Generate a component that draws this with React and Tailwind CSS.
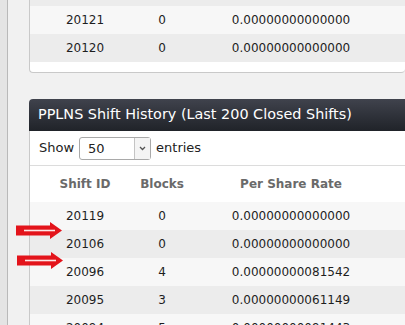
const topRows = [
  { id: '20121', blocks: '0', rate: '0.00000000000000' },
  { id: '20120', blocks: '0', rate: '0.00000000000000' },
];

const rows = [
  { id: '20119', blocks: '0', rate: '0.00000000000000' },
  { id: '20106', blocks: '0', rate: '0.00000000000000' },
  { id: '20096', blocks: '4', rate: '0.00000000081542' },
  { id: '20095', blocks: '3', rate: '0.00000000061149' },
  { id: '20094', blocks: '5', rate: '0.00000000091443' },
];

function Row({ row, odd }) {
  return (
    <div className={`flex h-[28px] items-center text-[12px] text-[#1e1e1e] ${odd ? 'bg-[#f7f7f7]' : 'bg-[#ececec]'}`}>
      <div className="w-[110px] text-center">{row.id}</div>
      <div className="w-[44px] text-center">{row.blocks}</div>
      <div className="w-[214px] text-center">{row.rate}</div>
    </div>
  );
}

function Arrow() {
  return (
    <svg width="48" height="17" viewBox="0 0 48 17">
      <path d="M1 3.5 H35 V0 L47 8.5 L35 17 V13.5 H1 Z" fill="#e3141b" />
      <path d="M9 8.5 H40" stroke="#fde6e6" strokeWidth="1.6" />
    </svg>
  );
}

export default function App() {
  return (
    <div className="relative flex h-[325px] w-[405px] overflow-hidden bg-[#f1f1f1] font-['DejaVu_Sans',Verdana,sans-serif]">
      <div className="w-[8px] shrink-0 border-r border-[#b9b9b9] bg-[#e4e4e4]" />
      <div className="flex flex-1 flex-col pl-[21px]">
        <div className="rounded-b-[4px] border border-t-0 border-r-0 border-[#c9c9c9] bg-white pb-[10px]">
          <div className="h-[6px] bg-[#ececec]" />
          {topRows.map((r, i) => (
            <Row key={r.id} row={r} odd={i % 2 === 0} />
          ))}
        </div>

        <div className="mt-[26px] flex-1 rounded-t-[4px] bg-white">
          <div className="flex h-[32px] items-center rounded-tl-[4px] bg-gradient-to-b from-[#40434d] to-[#202329] pl-[9px] text-[14.4px] text-white">
            PPLNS Shift History (Last 200 Closed Shifts)
          </div>
          <div className="border-l border-[#c9c9c9]">
            <div className="flex h-[35px] items-center gap-[5px] border-b border-[#dcdcdc] pl-[9px] text-[13px] text-[#222]">
              <span>Show</span>
              <div className="flex h-[23px] w-[72px] items-stretch rounded-[3px] border border-[#a9a9a9] bg-white">
                <span className="flex-1 pl-[8px] leading-[21px]">50</span>
                <span className="flex w-[16px] items-center justify-center border-l border-[#c4c4c4] bg-[#f4f4f4]">
                  <svg width="7" height="5" viewBox="0 0 7 5">
                    <path d="M1 1 L3.5 3.5 L6 1" stroke="#555" strokeWidth="1.3" fill="none" />
                  </svg>
                </span>
              </div>
              <span>entries</span>
            </div>
            <div className="flex h-[36px] items-center text-[12px] font-bold text-[#6a6a6a]">
              <div className="w-[110px] text-center">Shift ID</div>
              <div className="w-[44px] text-center">Blocks</div>
              <div className="w-[214px] text-center">Per Share Rate</div>
            </div>
            {rows.map((r, i) => (
              <Row key={r.id} row={r} odd={i % 2 === 0} />
            ))}
          </div>
        </div>
      </div>

      <div className="absolute left-[15px] top-[222px]">
        <Arrow />
      </div>
      <div className="absolute left-[16px] top-[252px]">
        <Arrow />
      </div>
    </div>
  );
}
